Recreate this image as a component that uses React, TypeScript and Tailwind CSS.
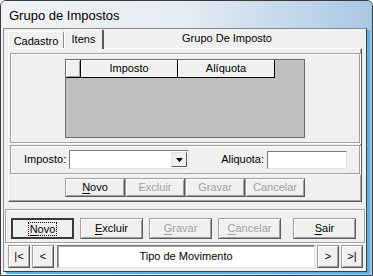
import React from 'react';

const font = { fontFamily: '"Liberation Sans", Arial, sans-serif' };

function Btn({ label, u, disabled, w = 'w-[60px]', h = 'h-[19px]' }: { label: string; u: number; disabled?: boolean; w?: string; h?: string }) {
  return (
    <div
      className={`${w} ${h} flex items-center justify-center border border-[#a0a0a0] border-r-[#5a5a5a] border-b-[#5a5a5a] shadow-[inset_1px_1px_0_#ffffff,inset_-1px_-1px_0_#a0a0a0] bg-[#f0f0f0] text-[11px] ${disabled ? 'text-[#a0a0a0]' : 'text-black'}`}
    >
      {u < 0 ? (
        <span>{label}</span>
      ) : (
        <span>
          {label.slice(0, u)}
          <span className="underline underline-offset-[2px]">{label[u]}</span>
          {label.slice(u + 1)}
        </span>
      )}
    </div>
  );
}

function NavBtn({ label }: { label: string }) {
  return (
    <div className="w-[22px] h-[23px] flex items-center justify-center border border-[#a0a0a0] border-r-[#5a5a5a] border-b-[#5a5a5a] shadow-[inset_1px_1px_0_#ffffff,inset_-1px_-1px_0_#a0a0a0] bg-[#f0f0f0] text-[11px] text-black">
      {label}
    </div>
  );
}

export default function App() {
  return (
    <div
      style={font}
      className="w-[373px] h-[276px] flex flex-col border border-[#3b3b3b] rounded-t-[6px] overflow-hidden bg-[linear-gradient(to_right,#f2f4f7_0%,#e3eaf1_55%,#a3c4e6_100%)] text-black"
    >
      {/* Title bar */}
      <div className="h-[27px] shrink-0 flex items-center pl-[8px] pt-[3px] text-[13px] text-black bg-[linear-gradient(to_right,#f1f3f6_0%,#e4ebf2_50%,#a9c7e6_100%)]">
        Grupo de Impostos
      </div>

      {/* Body */}
      <div className="flex-1 ml-[2px] mr-[5px] mb-[3px] bg-[#f0f0f0] border border-[#8c8c8c] border-r-[#3f3f3f] border-b-[#3f3f3f] shadow-[3px_2px_0_0_#58b2e8] flex flex-col">
        {/* Tabs */}
        <div className="h-[19px] shrink-0 flex items-end pl-[4px] text-[11px]">
          <div className="w-[56px] h-[17px] border-t border-l border-[#ffffff] border-r border-r-[#8a8a8a] rounded-t-[2px] flex items-center justify-center pt-[2px]">
            Cadastro
          </div>
          <div className="w-[40px] h-[20px] -mb-[1px] relative z-10 bg-[#f0f0f0] border-t border-l border-[#ffffff] border-r-2 border-r-[#5a5a5a] rounded-t-[2px] flex items-center justify-center">
            Itens
          </div>
          <div className="flex-1 h-[19px] flex items-center justify-center pr-[16px]">Grupo De Imposto</div>
        </div>

        {/* Tab page */}
        <div className="ml-[4px] w-[354px] h-[154px] shrink-0 border border-[#ffffff] border-r-[#5a5a5a] border-b-[#5a5a5a] shadow-[inset_-1px_-1px_0_#a0a0a0] flex flex-col">
          {/* Grid group */}
          <div className="mx-[1px] mt-[4px] h-[90px] border border-[#a0a0a0] shadow-[inset_1px_1px_0_#ffffff,1px_1px_0_#ffffff] flex justify-center pt-[5px]">
            <div className="w-[240px] h-[79px] bg-[#c0c0c0] border border-[#6b6b6b] flex items-start">
              <div className="flex h-[18px] border-b border-black bg-[#f0f0f0] text-[11px]">
                <div className="w-[15px] border-r border-black shadow-[inset_1px_1px_0_#ffffff,inset_-1px_-1px_0_#a0a0a0]" />
                <div className="w-[97px] border-r border-black flex items-center justify-center shadow-[inset_1px_1px_0_#ffffff]">Imposto</div>
                <div className="w-[97px] border-r border-black flex items-center justify-center shadow-[inset_1px_1px_0_#ffffff]">Alíquota</div>
              </div>
            </div>
          </div>

          {/* Fields group */}
          <div className="mx-[1px] mt-[2px] h-[29px] border border-[#a0a0a0] shadow-[inset_1px_1px_0_#ffffff,1px_1px_0_#ffffff] flex items-center text-[11px]">
            <span className="ml-[13px] mr-[3px]">Imposto:</span>
            <div className="w-[120px] h-[19px] bg-white border border-[#7a7a7a] border-r-[#e3e3e3] border-b-[#e3e3e3] flex justify-end p-[1px]">
              <div className="w-[16px] h-full bg-[#f0f0f0] border border-[#e3e3e3] border-r-[#5a5a5a] border-b-[#5a5a5a] flex items-center justify-center">
                <svg width="7" height="4" viewBox="0 0 7 4"><path d="M0 0h7L3.5 4z" fill="#000" /></svg>
              </div>
            </div>
            <span className="ml-[32px] mr-[3px]">Aliquota:</span>
            <div className="w-[80px] h-[18px] bg-white border border-[#7a7a7a] border-r-[#e3e3e3] border-b-[#e3e3e3]" />
          </div>

          {/* Tab buttons */}
          <div className="mt-[4px] flex justify-center">
            <Btn label="Novo" u={0} />
            <Btn label="Excluir" u={-1} disabled />
            <Btn label="Gravar" u={-1} disabled />
            <Btn label="Cancelar" u={-1} disabled />
          </div>
        </div>

        {/* Bottom button bar */}
        <div className="mx-[1px] mt-[7px] h-[34px] shrink-0 border border-[#a0a0a0] shadow-[inset_1px_1px_0_#ffffff,1px_1px_0_#ffffff] flex items-start pt-[8px] pl-[5px]">
          <div className="w-[63px] h-[21px] flex items-center justify-center border-2 border-[#3a3a3a] bg-[#f0f0f0] text-[11px]">
            <span className="outline-1 outline-dotted outline-black px-[1px] leading-[12px]">
              <span className="underline underline-offset-[2px]">N</span>ovo
            </span>
          </div>
          <div className="ml-[6px]"><Btn label="Excluir" u={0} w="w-[63px]" h="h-[21px]" /></div>
          <div className="ml-[6px]"><Btn label="Gravar" u={0} disabled w="w-[63px]" h="h-[21px]" /></div>
          <div className="ml-[6px]"><Btn label="Cancelar" u={0} disabled w="w-[63px]" h="h-[21px]" /></div>
          <div className="ml-[12px]"><Btn label="Sair" u={0} w="w-[63px]" h="h-[21px]" /></div>
        </div>

        {/* Navigation */}
        <div className="mt-[2px] ml-[4px] flex items-center gap-[2px]">
          <NavBtn label="|<" />
          <NavBtn label="<" />
          <div className="ml-[1px] w-[258px] h-[23px] bg-white border border-[#7a7a7a] border-r-[#e3e3e3] border-b-[#e3e3e3] shadow-[inset_1px_1px_0_#a0a0a0] flex items-center justify-center text-[11px]">
            Tipo de Movimento
          </div>
          <NavBtn label=">" />
          <NavBtn label=">|" />
        </div>
      </div>
    </div>
  );
}
